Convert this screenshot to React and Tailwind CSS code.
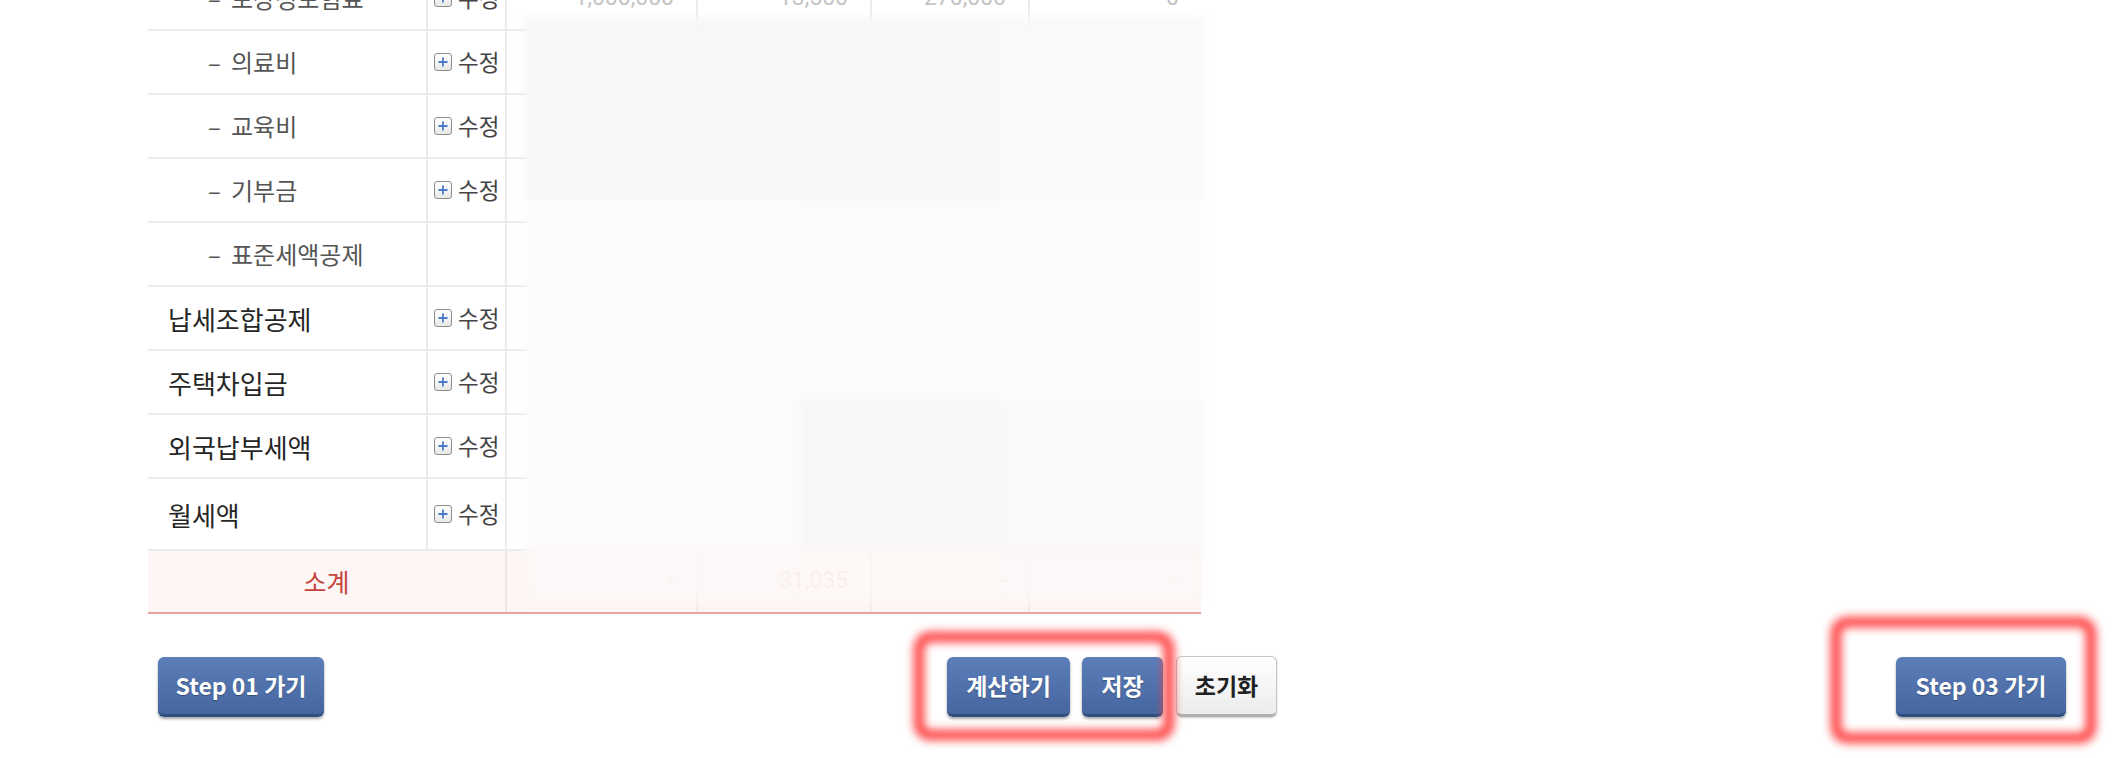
import React from "react";

const rows = [
  { label: "보장성보험료", sub: true, edit: true, h: "h-[64px]", nums: ["1,000,000", "13,500", "270,000", "0"] },
  { label: "의료비", sub: true, edit: true, h: "h-[64px]" },
  { label: "교육비", sub: true, edit: true, h: "h-[64px]" },
  { label: "기부금", sub: true, edit: true, h: "h-[64px]" },
  { label: "표준세액공제", sub: true, edit: false, h: "h-[64px]" },
  { label: "납세조합공제", sub: false, edit: true, h: "h-[64px]" },
  { label: "주택차입금", sub: false, edit: true, h: "h-[64px]" },
  { label: "외국납부세액", sub: false, edit: true, h: "h-[64px]" },
  { label: "월세액", sub: false, edit: true, h: "h-[72px]" },
];

const KR = "font-['Noto_Sans_CJK_KR','Noto_Sans',sans-serif]";

function PlusIcon() {
  return (
    <span className="flex h-[18px] w-[18px] shrink-0 items-center justify-center rounded-[3px] border-[1.5px] border-[#8c8c8c] bg-gradient-to-b from-white to-[#e9e9e9]">
      <svg width="12" height="12" viewBox="0 0 12 12">
        <path d="M6 1.5v9M1.5 6h9" stroke="#4a7cc4" strokeWidth="1.8" />
      </svg>
    </span>
  );
}

function BlueButton({ children, w }) {
  return (
    <button
      className={`${w} h-[60px] rounded-[6px] border-b-[3px] border-[#2f4d80] bg-gradient-to-b from-[#5b7eb9] to-[#4666a0] text-[23px] font-bold text-white shadow-[0_2px_3px_rgba(0,0,0,0.35)] [text-shadow:0_1px_1px_rgba(0,0,0,0.3)] ${KR}`}
    >
      {children}
    </button>
  );
}

function Glow({ className }) {
  return (
    <div
      className={`pointer-events-none absolute rounded-[16px] border-[10px] border-[#ff3a3a] blur-[5px] ${className}`}
    />
  );
}

export default function App() {
  return (
    <div className={`relative h-[758px] w-[2116px] overflow-hidden bg-white ${KR}`}>
      {/* table */}
      <div className="relative ml-[148px] -mt-[33px] w-[1053px]">
        {rows.map((r, i) => (
          <div
            key={i}
            className={`grid grid-cols-[280px_79px_191px_174px_158px_171px] border-b-2 border-[#ececec] ${r.h}`}
          >
            <div className="flex items-center border-r-2 border-[#ececec]">
              {r.sub ? (
                <div className="flex items-center pl-[60px] text-[24px] text-[#555]">
                  <span className="w-[23px]">–</span>
                  <span>{r.label}</span>
                </div>
              ) : (
                <div className="pl-[20px] text-[26px] text-[#262626]">{r.label}</div>
              )}
            </div>
            <div className="flex items-center gap-[6px] border-r-2 border-[#ececec] pl-[6px]">
              {r.edit && (
                <>
                  <PlusIcon />
                  <span className="whitespace-nowrap text-[22.5px] text-[#444]">수정</span>
                </>
              )}
            </div>
            {[0, 1, 2, 3].map((c) => (
              <div
                key={c}
                className={`flex items-center justify-end pr-[22px] font-['Roboto',sans-serif] text-[23px] text-[#c4c4c4] ${
                  c < 3 ? "border-r-2 border-[#ececec]" : ""
                }`}
              >
                {r.nums ? r.nums[c] : ""}
              </div>
            ))}
          </div>
        ))}
        {/* subtotal */}
        <div className="grid h-[63px] grid-cols-[359px_191px_174px_158px_171px] border-b-2 border-[#e9a39e] bg-[#fdf6f5]">
          <div className="flex items-center justify-center border-r-2 border-[#efe6e5] text-[25px] text-[#c6433c]">
            소계
          </div>
          {["-", "31,035", "-", "-"].map((v, c) => (
            <div
              key={c}
              className={`flex items-center justify-end pr-[22px] font-['Roboto',sans-serif] text-[23px] text-[#e6cfce] ${
                c < 3 ? "border-r-2 border-[#f3ecec]" : ""
              }`}
            >
              {v}
            </div>
          ))}
        </div>

        {/* redaction overlay */}
        <div className="pointer-events-none absolute left-[377px] top-[50px] h-[584px] w-[680px] blur-[5px]">
          <div className="grid h-full grid-cols-[276px_198px_206px] grid-rows-[183px_201px_150px_50px]">
            <div className="bg-[#f7f7f7]" />
            <div className="bg-[#f8f8f8]" />
            <div className="bg-[#f9f9f9]" />
            <div className="bg-[#fcfcfc]" />
            <div className="bg-[#fbfbfb]" />
            <div className="bg-[#fcfcfc]" />
            <div className="bg-[#fcfafa]" />
            <div className="bg-[#f8f6f7]" />
            <div className="bg-[#faf8f8]" />
            <div className="bg-[#fdf8f7]/80" />
            <div className="bg-[#fdf8f7]/75" />
            <div className="bg-[#fdf8f7]/80" />
          </div>
        </div>
      </div>

      {/* buttons */}
      <div className="mt-[42px] ml-[158px] grid w-[1908px] grid-cols-3 items-center">
        <div className="justify-self-start">
          <BlueButton w="w-[166px]">Step 01 가기</BlueButton>
        </div>
        <div className="flex items-center gap-[13px] justify-self-center">
          <div className="relative flex items-center gap-[12px]">
            <Glow className="-left-[33px] -right-[11px] -top-[25px] -bottom-[23px]" />
            <BlueButton w="w-[123px]">계산하기</BlueButton>
            <BlueButton w="w-[81px]">저장</BlueButton>
          </div>
          <button
            className={`h-[61px] w-[101px] rounded-[6px] border border-[#c4c4c4] border-b-[3px] border-b-[#b0b0b0] bg-gradient-to-b from-white to-[#ececec] text-[23px] font-bold text-[#222] shadow-[0_1px_2px_rgba(0,0,0,0.2)] ${KR}`}
          >
            초기화
          </button>
        </div>
        <div className="relative justify-self-end">
          <Glow className="-left-[65px] -right-[30px] -top-[40px] -bottom-[26px]" />
          <BlueButton w="w-[170px]">Step 03 가기</BlueButton>
        </div>
      </div>
    </div>
  );
}
